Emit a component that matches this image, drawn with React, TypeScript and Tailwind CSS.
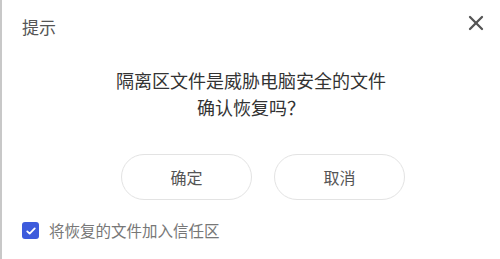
import { X } from 'lucide-react';

export default function App() {
  return (
    <div
      className="w-[500px] h-[259px] bg-white border-l-2 border-[#c8c8c8] flex flex-col relative overflow-hidden"
      style={{ fontFamily: '"Noto Sans CJK SC", "Noto Sans", sans-serif' }}
    >
      <div className="h-[54px] flex items-center pl-[20px] text-[17px] text-[#555]">提示</div>
      <button className="absolute right-[12px] top-[11px] text-[#555]">
        <X className="w-[24px] h-[24px]" strokeWidth={2.3} />
      </button>
      <div className="flex flex-col items-center text-[18px] leading-[27px] text-[#333] mt-[13px]">
        <div>隔离区文件是威胁电脑安全的文件</div>
        <div>确认恢复吗？</div>
      </div>
      <div className="flex justify-center gap-[22px] mt-[33px] pl-[24px]">
        <button className="w-[131px] h-[46px] rounded-full border border-[#e3e3e3] text-[16px] text-[#555] bg-white">
          确定
        </button>
        <button className="w-[131px] h-[46px] rounded-full border border-[#e3e3e3] text-[16px] text-[#555] bg-white">
          取消
        </button>
      </div>
      <div className="flex items-center gap-[10px] pl-[20px] mt-[19px]">
        <div className="w-[17px] h-[17px] rounded-[3px] bg-[#3d5bdc] flex items-center justify-center">
          <svg viewBox="0 0 16 16" className="w-[12px] h-[12px]" fill="none" stroke="white" strokeWidth="2.4" strokeLinecap="round" strokeLinejoin="round">
            <path d="M3 8.5l3.2 3L13 4.5" />
          </svg>
        </div>
        <span className="text-[15.5px] text-[#777]">将恢复的文件加入信任区</span>
      </div>
    </div>
  );
}
